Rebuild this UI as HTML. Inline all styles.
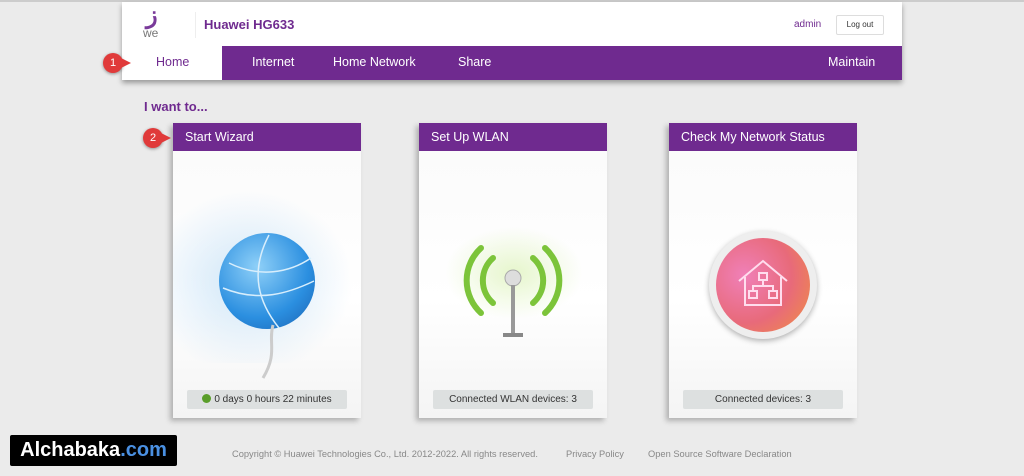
<!DOCTYPE html><html><head><style>
body{margin:0;width:1024px;height:476px;background:#ebebeb;font-family:"Liberation Sans",sans-serif;position:relative;overflow:hidden}
.a{position:absolute}
.card{position:absolute;top:123px;width:188px;height:295px;background:linear-gradient(#fafafa,#fff 60%,#f4f4f4);box-shadow:-3px 3px 5px rgba(0,0,0,.25)}
.card .h{height:28px;background:#6f2a8f;color:#fff;font-size:12.5px;line-height:28px;padding-left:12px}
.card .f{position:absolute;left:14px;top:267px;width:160px;height:19px;background:#dde0e0;border-radius:2px;font-size:10px;color:#333;text-align:center;line-height:19px}
.badge{position:absolute;width:20px;height:20px;border-radius:50%;background:#e03a3a;color:#fff;font-size:11px;text-align:center;line-height:20px;box-shadow:0 1px 3px rgba(0,0,0,.4)}
.badge:after{content:"";position:absolute;right:-8px;top:5px;border-left:10px solid #e03a3a;border-top:5px solid transparent;border-bottom:5px solid transparent}
.n{font-size:12.5px}
</style></head><body>
<div class="a" style="left:0;top:0;width:1024px;height:2px;background:#ccc"></div>
<div class="a" style="left:122px;top:2px;width:780px;height:78px;background:#fff;box-shadow:0 3px 5px rgba(0,0,0,.35)"></div>
<div class="a" style="left:146px;top:5px;width:16px;height:22px;color:#7a3a9a;font-size:24px;font-weight:bold;line-height:22px">ز</div>
<div class="a" style="left:143px;top:26px;font-size:12px;color:#777">we</div>
<div class="a" style="left:195px;top:12px;width:1px;height:26px;background:#eee"></div>
<div class="a" style="left:204px;top:17px;font-size:13px;font-weight:bold;color:#6f2a8f">Huawei HG633</div>
<div class="a" style="left:794px;top:19px;font-size:10px;color:#6f2a8f">admin</div>
<div class="a" style="left:836px;top:15px;width:46px;height:18px;border:1px solid #ddd;border-radius:2px;font-size:8px;color:#333;text-align:center;line-height:18px">Log out</div>
<div class="a" style="left:222px;top:46px;width:680px;height:34px;background:#6f2a8f"></div>
<div class="a n" style="left:156px;top:55px;color:#6f2a8f">Home</div>
<div class="a n" style="left:252px;top:55px;color:#fff">Internet</div>
<div class="a n" style="left:333px;top:55px;color:#fff">Home Network</div>
<div class="a n" style="left:458px;top:55px;color:#fff">Share</div>
<div class="a n" style="left:828px;top:55px;color:#fff">Maintain</div>
<div class="badge" style="left:103px;top:53px">1</div>
<div class="a" style="left:144px;top:99px;font-size:13px;font-weight:bold;color:#6f2a8f">I want to...</div>
<div class="card" style="left:173px"><div class="h">Start Wizard</div>
<div class="a" style="left:0;top:60px;width:188px;height:180px;background:radial-gradient(ellipse at 40% 55%,#cfe6f8,rgba(255,255,255,0) 65%)"></div>
<div class="a" style="left:46px;top:110px;width:96px;height:96px;border-radius:50%;background:radial-gradient(circle at 40% 35%,#8fd0f8,#2b8fe0 60%,#1a60b0);"></div>
<svg class="a" style="left:46px;top:110px" width="96" height="96"><g fill="none" stroke="#d8eefc" stroke-width="1.5"><path d="M10 30C40 45 70 40 92 25"/><path d="M4 55C40 70 70 60 95 48"/><path d="M50 2C30 40 40 70 60 95"/></g></svg>
<svg class="a" style="left:80px;top:200px" width="40" height="60"><path d="M20 2C15 20 25 30 10 55" stroke="#ccc" stroke-width="3" fill="none"/></svg>
<div class="f"><span style="display:inline-block;width:9px;height:9px;border-radius:50%;background:#5a9e2a;vertical-align:-1px;margin-right:3px"></span>0 days 0 hours 22 minutes</div></div>
<div class="badge" style="left:143px;top:128px">2</div>
<div class="card" style="left:419px"><div class="h">Set Up WLAN</div>
<div class="a" style="left:20px;top:100px;width:150px;height:100px;background:radial-gradient(ellipse,#e6f6cc,rgba(255,255,255,0) 65%)"></div>
<svg class="a" style="left:44px;top:110px" width="100" height="110"><g fill="none" stroke="#7cc43a" stroke-width="6" stroke-linecap="round"><path d="M30 25A30 30 0 0 0 30 70"/><path d="M18 15A44 44 0 0 0 18 80"/><path d="M70 25A30 30 0 0 1 70 70"/><path d="M82 15A44 44 0 0 1 82 80"/></g><circle cx="50" cy="45" r="8" fill="#ddd" stroke="#aaa"/><rect x="48" y="52" width="4" height="50" fill="#999"/><rect x="40" y="100" width="20" height="4" fill="#888"/></svg>
<div class="f">Connected WLAN devices: 3</div></div>
<div class="card" style="left:669px"><div class="h">Check My Network Status</div>
<div class="a" style="left:40px;top:108px;width:108px;height:108px;border-radius:50%;background:#eee;box-shadow:0 2px 6px rgba(0,0,0,.3)"></div>
<div class="a" style="left:47px;top:115px;width:94px;height:94px;border-radius:50%;background:radial-gradient(circle at 30% 40%,#f080b8,#e86a7a 55%,#f09040)"></div>
<svg class="a" style="left:66px;top:132px" width="56" height="56"><g fill="none" stroke="#fde" stroke-width="2"><path d="M4 26L28 6 52 26M10 22V50H46V22"/><rect x="24" y="18" width="8" height="7"/><rect x="14" y="36" width="8" height="7"/><rect x="34" y="36" width="8" height="7"/><path d="M28 25V31M18 36V31H38V36"/></g></svg>
<div class="f">Connected devices: 3</div></div>
<div class="a" style="left:10px;top:435px;width:167px;height:31px;background:#000;border-radius:2px;color:#fff;font-size:20px;font-weight:bold;line-height:31px;text-align:center">Alchabaka<span style="color:#4a90e2">.com</span></div>
<div class="a" style="left:232px;top:449px;font-size:9.3px;color:#888">Copyright © Huawei Technologies Co., Ltd. 2012-2022. All rights reserved.</div>
<div class="a" style="left:566px;top:449px;font-size:9.3px;color:#888">Privacy Policy</div>
<div class="a" style="left:648px;top:449px;font-size:9.3px;color:#888">Open Source Software Declaration</div>
</body></html>
